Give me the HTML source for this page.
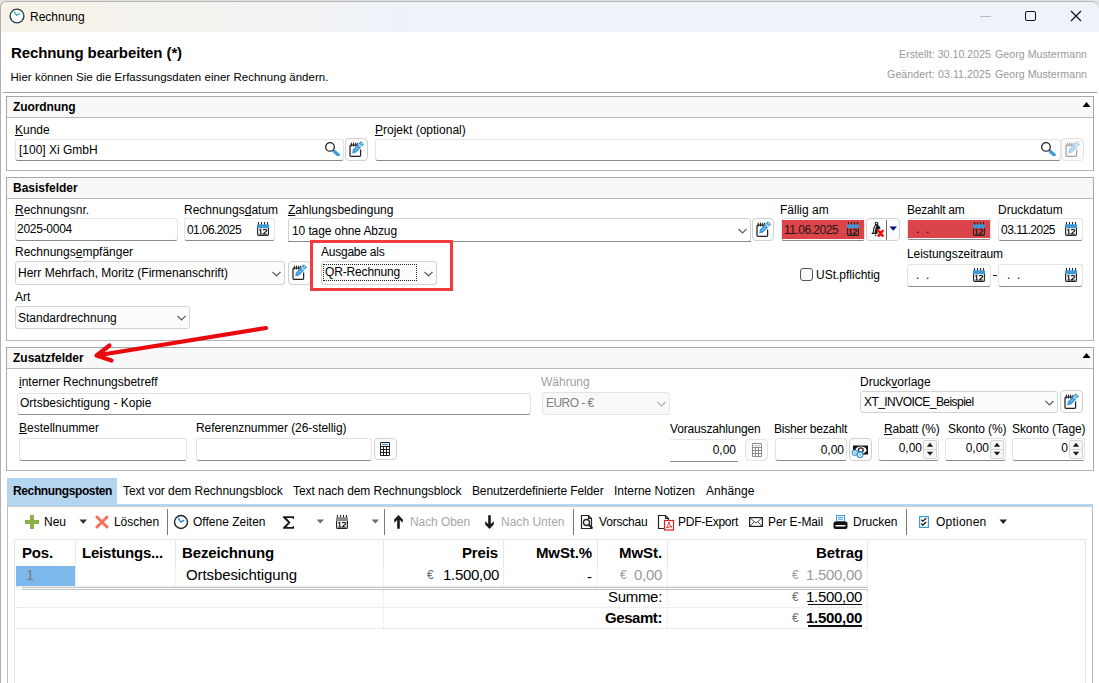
<!DOCTYPE html><html><head><meta charset="utf-8"><style>
html,body{margin:0;padding:0;width:1099px;height:683px;overflow:hidden;background:#fff}
.t,.r{position:absolute}
.t{font-family:"Liberation Sans",sans-serif;white-space:pre}
.t u{text-decoration:underline;text-underline-offset:1px}
</style></head><body>
<div class="r" style="left:0px;top:0px;width:1099px;height:8px;background:#e2e2e2"></div>
<div class="r" style="left:0px;top:1px;width:1099px;height:31px;background:linear-gradient(90deg,#f8f3e8 0px,#f3f2ee 180px,#eef2f9 420px,#eef2f9 100%);border-top:1px solid #b6b6b6;border-left:1px solid #b0b0b0;border-radius:6px 8px 0 0;box-sizing:border-box"></div>
<div class="r" style="left:0px;top:6px;width:1px;height:677px;background:#b0b0b0"></div>
<svg class="r" style="left:9px;top:8px" width="16" height="16" viewBox="0 0 16 16"><circle cx="8" cy="8" r="6.9" fill="#fff" stroke="#243b47" stroke-width="1.4"/><path d="M5.3 4 L7.6 7.3 L10.5 5.6" fill="none" stroke="#3fb3bf" stroke-width="1.4" stroke-linecap="round"/></svg>
<div class="t" style="left:30.00px;top:12px;font-size:12px;line-height:11px;height:15px;font-weight:400;color:#000;letter-spacing:0.000px;">Rechnung</div>
<div class="r" style="left:980px;top:16px;width:11px;height:1px;background:#b8b8b8"></div>
<div class="r" style="left:1025px;top:11px;width:11px;height:10px;border:1.3px solid #111;border-radius:2px;box-sizing:border-box"></div>
<svg class="r" style="left:1070px;top:10px" width="12" height="12" viewBox="0 0 12 12"><path d="M1 1 L11 11 M11 1 L1 11" stroke="#111" stroke-width="1.2"/></svg>
<div class="t" style="left:11.00px;top:46px;font-size:15px;line-height:14px;height:18px;font-weight:700;color:#000;letter-spacing:-0.102px;">Rechnung bearbeiten (*)</div>
<div class="t" style="left:10.50px;top:72px;font-size:11.5px;line-height:10px;height:14px;font-weight:400;color:#000;letter-spacing:0.026px;">Hier können Sie die Erfassungsdaten einer Rechnung ändern.</div>
<div class="t" style="left:487.00px;width:600px;text-align:right;top:49px;font-size:10.6px;line-height:10px;height:14px;font-weight:400;color:#999;letter-spacing:0.043px;">Georg Mustermann</div>
<div class="t" style="left:391.00px;width:600px;text-align:right;top:49px;font-size:10.6px;line-height:10px;height:14px;font-weight:400;color:#999;letter-spacing:0.033px;">Erstellt: 30.10.2025</div>
<div class="t" style="left:487.00px;width:600px;text-align:right;top:69px;font-size:10.6px;line-height:10px;height:14px;font-weight:400;color:#999;letter-spacing:0.043px;">Georg Mustermann</div>
<div class="t" style="left:391.00px;width:600px;text-align:right;top:69px;font-size:10.6px;line-height:10px;height:14px;font-weight:400;color:#999;letter-spacing:0.082px;">Geändert: 03.11.2025</div>
<div class="r" style="left:3px;top:92px;width:1094px;height:1px;background:#a0a0a0"></div>
<div class="r" style="left:6px;top:96px;width:1088px;height:75px;border:1px solid #a9a9a9;border-bottom-color:#b6b6b6;box-sizing:border-box"></div>
<div class="r" style="left:7px;top:97px;width:1086px;height:20px;background:#f8f8f8"></div>
<div class="r" style="left:7px;top:117px;width:1086px;height:1px;background:#b8b8b8"></div>
<div class="t" style="left:13.00px;top:102px;font-size:12px;line-height:11px;height:15px;font-weight:700;color:#000;letter-spacing:-0.090px;">Zuordnung</div>
<svg class="r" style="left:1082px;top:101px" width="9" height="7" viewBox="0 0 9 7"><path d="M0.5 6 L4.5 1 L8.5 6 Z" fill="#000"/></svg>
<div class="t" style="left:15.00px;top:125px;font-size:12px;line-height:11px;height:15px;font-weight:400;color:#000;letter-spacing:0.000px;"><u>K</u>unde</div>
<div class="r" style="left:15px;top:139px;width:329px;height:22px;background:#fff;border:1px solid #e3e3e3;border-bottom:1px solid #8a8a8a;border-radius:3px;box-sizing:border-box"></div>
<div class="t" style="left:19.00px;top:145px;font-size:12px;line-height:11px;height:15px;font-weight:400;color:#000;letter-spacing:0.000px;">[100] Xi GmbH</div>
<svg class="r" style="left:324px;top:141px" width="17" height="15" viewBox="0 0 17 15"><circle cx="6" cy="5.9" r="4.3" fill="none" stroke="#222" stroke-width="1.3"/><path d="M9.2 9.2 L10 10" stroke="#222" stroke-width="2"/><path d="M10.4 10.5 L14.2 14" stroke="#3a9ad9" stroke-width="3.2" stroke-linecap="round"/></svg>
<div class="r" style="left:345px;top:138px;width:23px;height:23px;background:#fdfdfd;border:1px solid #d0d0d0;border-radius:4px;box-sizing:border-box"></div>
<svg class="r" style="left:345px;top:138px" width="23" height="23" viewBox="0 0 23 23">
<path d="M5 8.2 Q5 7.2 6 7.2 H12.5 M5 8.2 V17.3 Q5 18.3 6 18.3 H14.6 Q15.6 18.3 15.6 17.3 V11.5" fill="none" stroke="#222" stroke-width="1.25"/>
<path d="M6.3 5 V8 M8.5 5 V8 M10.7 5 V8 M12.7 5.3 V7.5" stroke="#222" stroke-width="1.1" stroke-linecap="round"/>
<g transform="translate(7.2 15.6) rotate(-47)">
<path d="M0 0 L3.4 -2.2 H10.8 V2.2 H3.4 Z" fill="#3b9ad9"/>
<rect x="11.6" y="-2.2" width="3.4" height="4.4" fill="#3b9ad9"/>
<path d="M4.2 0 H10.5" stroke="#fff" stroke-width="0.8" stroke-dasharray="1.3 0.9"/>
<rect x="12.7" y="-0.6" width="1.3" height="1.2" fill="#fff"/>
</g>
</svg>
<div class="t" style="left:375.00px;top:125px;font-size:12px;line-height:11px;height:15px;font-weight:400;color:#000;letter-spacing:0.000px;"><u>P</u>rojekt (optional)</div>
<div class="r" style="left:375px;top:139px;width:686px;height:22px;background:#fff;border:1px solid #e3e3e3;border-bottom:1px solid #8a8a8a;border-radius:3px;box-sizing:border-box"></div>
<svg class="r" style="left:1040px;top:141px" width="17" height="15" viewBox="0 0 17 15"><circle cx="6" cy="5.9" r="4.3" fill="none" stroke="#222" stroke-width="1.3"/><path d="M9.2 9.2 L10 10" stroke="#222" stroke-width="2"/><path d="M10.4 10.5 L14.2 14" stroke="#3a9ad9" stroke-width="3.2" stroke-linecap="round"/></svg>
<div class="r" style="left:1061px;top:138px;width:23px;height:23px;background:#fbfbfb;border:1px solid #e3e3e3;border-radius:4px;box-sizing:border-box"></div>
<svg class="r" style="left:1061px;top:138px" width="23" height="23" viewBox="0 0 23 23">
<path d="M5 8.2 Q5 7.2 6 7.2 H12.5 M5 8.2 V17.3 Q5 18.3 6 18.3 H14.6 Q15.6 18.3 15.6 17.3 V11.5" fill="none" stroke="#a3a3a3" stroke-width="1.25"/>
<path d="M6.3 5 V8 M8.5 5 V8 M10.7 5 V8 M12.7 5.3 V7.5" stroke="#a3a3a3" stroke-width="1.1" stroke-linecap="round"/>
<g transform="translate(7.2 15.6) rotate(-47)">
<path d="M0 0 L3.4 -2.2 H10.8 V2.2 H3.4 Z" fill="#a9d1ef"/>
<rect x="11.6" y="-2.2" width="3.4" height="4.4" fill="#a9d1ef"/>
<path d="M4.2 0 H10.5" stroke="#fff" stroke-width="0.8" stroke-dasharray="1.3 0.9"/>
<rect x="12.7" y="-0.6" width="1.3" height="1.2" fill="#fff"/>
</g>
</svg>
<div class="r" style="left:6px;top:177px;width:1088px;height:164px;border:1px solid #a9a9a9;border-bottom-color:#b6b6b6;box-sizing:border-box"></div>
<div class="r" style="left:7px;top:178px;width:1086px;height:20px;background:#f8f8f8"></div>
<div class="r" style="left:7px;top:198px;width:1086px;height:1px;background:#b8b8b8"></div>
<div class="t" style="left:13.00px;top:183px;font-size:12px;line-height:11px;height:15px;font-weight:700;color:#000;letter-spacing:0.000px;">Basisfelder</div>
<div class="t" style="left:15.00px;top:205px;font-size:12px;line-height:11px;height:15px;font-weight:400;color:#000;letter-spacing:0.000px;"><u>R</u>echnungsnr.</div>
<div class="r" style="left:15px;top:218px;width:163px;height:23px;background:#fff;border:1px solid #e3e3e3;border-bottom:1px solid #8a8a8a;border-radius:3px;box-sizing:border-box"></div>
<div class="t" style="left:17.00px;top:224px;font-size:12px;line-height:11px;height:15px;font-weight:400;color:#000;letter-spacing:-0.265px;">2025-0004</div>
<div class="t" style="left:184.00px;top:205px;font-size:12px;line-height:11px;height:15px;font-weight:400;color:#000;letter-spacing:0.000px;">Rechnungs<u>d</u>atum</div>
<div class="r" style="left:184px;top:218px;width:91px;height:23px;background:#fff;border:1px solid #e3e3e3;border-bottom:1px solid #8a8a8a;border-radius:3px;box-sizing:border-box"></div>
<svg class="r" style="left:257px;top:222px" width="13" height="14" viewBox="0 0 13 14">
<path d="M1.5 0.3 V3 M4.5 0.3 V3 M7.5 0.3 V3 M10.5 0.3 V3" stroke="#222" stroke-width="1.1" stroke-linecap="round"/>
<rect x="0" y="2.4" width="12" height="3.7" fill="#3a9ad9"/>
<path d="M0.6 6 V12.6 Q0.6 13.4 1.4 13.4 H10.6 Q11.4 13.4 11.4 12.6 V6" fill="none" stroke="#222" stroke-width="1.15"/>
<path d="M2.3 8.2 L3.7 7.4 V12 M2.3 12 H5" fill="none" stroke="#222" stroke-width="1.2"/>
<path d="M6.2 8.1 Q6.6 7.4 8 7.4 Q9.7 7.4 9.7 8.6 Q9.7 9.6 8 10.3 L6.3 12 H9.9" fill="none" stroke="#222" stroke-width="1.2"/>
</svg>
<div class="t" style="left:187.00px;top:225px;font-size:12px;line-height:11px;height:15px;font-weight:400;color:#000;letter-spacing:-0.606px;">01.06.2025</div>
<div class="t" style="left:288.00px;top:205px;font-size:12px;line-height:11px;height:15px;font-weight:400;color:#000;letter-spacing:0.000px;"><u>Z</u>ahlungsbedingung</div>
<div class="r" style="left:288px;top:218px;width:463px;height:24px;background:#fff;border:1px solid #cfcfcf;border-radius:3px;box-sizing:border-box"></div>
<svg class="r" style="left:738px;top:228px" width="9" height="6" viewBox="0 0 9 6"><path d="M0.5 1 L4.5 5 L8.5 1" fill="none" stroke="#5a5a5a" stroke-width="1.1"/></svg>
<div class="r" style="left:288px;top:241px;width:463px;height:1px;background:#8a8a8a"></div>
<div class="t" style="left:292.00px;top:226px;font-size:12px;line-height:11px;height:15px;font-weight:400;color:#000;letter-spacing:-0.098px;">10 tage ohne Abzug</div>
<div class="r" style="left:752px;top:218px;width:22px;height:23px;background:#fdfdfd;border:1px solid #d0d0d0;border-radius:4px;box-sizing:border-box"></div>
<svg class="r" style="left:752px;top:218px" width="23" height="23" viewBox="0 0 23 23">
<path d="M5 8.2 Q5 7.2 6 7.2 H12.5 M5 8.2 V17.3 Q5 18.3 6 18.3 H14.6 Q15.6 18.3 15.6 17.3 V11.5" fill="none" stroke="#222" stroke-width="1.25"/>
<path d="M6.3 5 V8 M8.5 5 V8 M10.7 5 V8 M12.7 5.3 V7.5" stroke="#222" stroke-width="1.1" stroke-linecap="round"/>
<g transform="translate(7.2 15.6) rotate(-47)">
<path d="M0 0 L3.4 -2.2 H10.8 V2.2 H3.4 Z" fill="#3b9ad9"/>
<rect x="11.6" y="-2.2" width="3.4" height="4.4" fill="#3b9ad9"/>
<path d="M4.2 0 H10.5" stroke="#fff" stroke-width="0.8" stroke-dasharray="1.3 0.9"/>
<rect x="12.7" y="-0.6" width="1.3" height="1.2" fill="#fff"/>
</g>
</svg>
<div class="t" style="left:780.00px;top:205px;font-size:12px;line-height:11px;height:15px;font-weight:400;color:#000;letter-spacing:0.000px;">Fällig am</div>
<div class="r" style="left:781px;top:218px;width:84px;height:23px;background:#fff;border:1px solid #e6e6e6;border-bottom:1px solid #8a8a8a;border-radius:3px;box-sizing:border-box"></div>
<div class="r" style="left:782px;top:220px;width:82px;height:19px;background:#db4449"></div>
<svg class="r" style="left:847px;top:222px" width="13" height="14" viewBox="0 0 13 14">
<path d="M1.5 0.3 V3 M4.5 0.3 V3 M7.5 0.3 V3 M10.5 0.3 V3" stroke="#222" stroke-width="1.1" stroke-linecap="round"/>
<rect x="0" y="2.4" width="12" height="3.7" fill="#3a9ad9"/>
<path d="M0.6 6 V12.6 Q0.6 13.4 1.4 13.4 H10.6 Q11.4 13.4 11.4 12.6 V6" fill="none" stroke="#222" stroke-width="1.15"/>
<path d="M2.3 8.2 L3.7 7.4 V12 M2.3 12 H5" fill="none" stroke="#222" stroke-width="1.2"/>
<path d="M6.2 8.1 Q6.6 7.4 8 7.4 Q9.7 7.4 9.7 8.6 Q9.7 9.6 8 10.3 L6.3 12 H9.9" fill="none" stroke="#222" stroke-width="1.2"/>
</svg>
<div class="t" style="left:784.00px;top:225px;font-size:12px;line-height:11px;height:15px;font-weight:400;color:#201818;letter-spacing:-0.517px;">11.06.2025</div>
<div class="r" style="left:866px;top:218px;width:34px;height:23px;background:#fdfdfd;border:1px solid #d0d0d0;border-radius:4px;box-sizing:border-box"></div>
<div class="r" style="left:886px;top:220px;width:1px;height:20px;background:#6a6a6a"></div>
<svg class="r" style="left:869px;top:221px" width="16" height="17" viewBox="0 0 16 17"><circle cx="7.5" cy="2.5" r="1.3" fill="#fff" stroke="#1a1a1a" stroke-width="1.1"/><path d="M7 3.6 C4.8 4.4 4.3 7 4 9.5 C3.8 11.2 3.1 12.2 2.3 12.9 L8.5 12.9 L8.5 8.8 C10 8.4 11.3 8 11.6 7.6 C11.1 5.9 10 4 7 3.6 Z" fill="#1a1a1a"/><path d="M7.1 4.8 C6 6.5 5.6 9 5 12" fill="none" stroke="#f4f4f4" stroke-width="1"/><circle cx="6.5" cy="14.4" r="0.8" fill="#1a1a1a"/><path d="M9.6 10 L13.6 14.6 M13.6 10 L9.6 14.6" stroke="#f00" stroke-width="2.6" stroke-linecap="round"/></svg>
<svg class="r" style="left:889px;top:226px" width="9" height="6" viewBox="0 0 9 6"><path d="M0.5 0.5 H8 L4.25 4.8 Z" fill="#0a0a7a"/></svg>
<div class="t" style="left:907.00px;top:205px;font-size:12px;line-height:11px;height:15px;font-weight:400;color:#000;letter-spacing:-0.253px;">Bezahlt am</div>
<div class="r" style="left:907px;top:218px;width:84px;height:22px;background:#fff;border:1px solid #e6e6e6;border-bottom:1px solid #8a8a8a;border-radius:3px;box-sizing:border-box"></div>
<div class="r" style="left:908px;top:220px;width:82px;height:18px;background:#db4449"></div>
<svg class="r" style="left:973px;top:222px" width="13" height="14" viewBox="0 0 13 14">
<path d="M1.5 0.3 V3 M4.5 0.3 V3 M7.5 0.3 V3 M10.5 0.3 V3" stroke="#222" stroke-width="1.1" stroke-linecap="round"/>
<rect x="0" y="2.4" width="12" height="3.7" fill="#3a9ad9"/>
<path d="M0.6 6 V12.6 Q0.6 13.4 1.4 13.4 H10.6 Q11.4 13.4 11.4 12.6 V6" fill="none" stroke="#222" stroke-width="1.15"/>
<path d="M2.3 8.2 L3.7 7.4 V12 M2.3 12 H5" fill="none" stroke="#222" stroke-width="1.2"/>
<path d="M6.2 8.1 Q6.6 7.4 8 7.4 Q9.7 7.4 9.7 8.6 Q9.7 9.6 8 10.3 L6.3 12 H9.9" fill="none" stroke="#222" stroke-width="1.2"/>
</svg>
<div class="t" style="left:916.00px;top:224px;font-size:12px;line-height:11px;height:15px;font-weight:400;color:#000;letter-spacing:0.000px;">.  .</div>
<div class="t" style="left:998.00px;top:205px;font-size:12px;line-height:11px;height:15px;font-weight:400;color:#000;letter-spacing:0.000px;">Druckdatum</div>
<div class="r" style="left:998px;top:218px;width:85px;height:23px;background:#fff;border:1px solid #e3e3e3;border-bottom:1px solid #8a8a8a;border-radius:3px;box-sizing:border-box"></div>
<svg class="r" style="left:1065px;top:222px" width="13" height="14" viewBox="0 0 13 14">
<path d="M1.5 0.3 V3 M4.5 0.3 V3 M7.5 0.3 V3 M10.5 0.3 V3" stroke="#222" stroke-width="1.1" stroke-linecap="round"/>
<rect x="0" y="2.4" width="12" height="3.7" fill="#3a9ad9"/>
<path d="M0.6 6 V12.6 Q0.6 13.4 1.4 13.4 H10.6 Q11.4 13.4 11.4 12.6 V6" fill="none" stroke="#222" stroke-width="1.15"/>
<path d="M2.3 8.2 L3.7 7.4 V12 M2.3 12 H5" fill="none" stroke="#222" stroke-width="1.2"/>
<path d="M6.2 8.1 Q6.6 7.4 8 7.4 Q9.7 7.4 9.7 8.6 Q9.7 9.6 8 10.3 L6.3 12 H9.9" fill="none" stroke="#222" stroke-width="1.2"/>
</svg>
<div class="t" style="left:1001.00px;top:225px;font-size:12px;line-height:11px;height:15px;font-weight:400;color:#000;letter-spacing:-0.517px;">03.11.2025</div>
<div class="t" style="left:15.00px;top:247px;font-size:12px;line-height:11px;height:15px;font-weight:400;color:#000;letter-spacing:0.000px;">Rechnungs<u>e</u>mpfänger</div>
<div class="r" style="left:15px;top:261px;width:270px;height:24px;background:#fcfcfc;border:1px solid #d2d2d2;border-radius:3px;box-sizing:border-box"></div>
<svg class="r" style="left:272px;top:271px" width="9" height="6" viewBox="0 0 9 6"><path d="M0.5 1 L4.5 5 L8.5 1" fill="none" stroke="#5a5a5a" stroke-width="1.1"/></svg>
<div class="t" style="left:18.00px;top:268px;font-size:12px;line-height:11px;height:15px;font-weight:400;color:#000;letter-spacing:0.000px;">Herr Mehrfach, Moritz (Firmenanschrift)</div>
<div class="r" style="left:288px;top:261px;width:23px;height:24px;background:#fdfdfd;border:1px solid #d0d0d0;border-radius:4px;box-sizing:border-box"></div>
<svg class="r" style="left:288px;top:261px" width="23" height="23" viewBox="0 0 23 23">
<path d="M5 8.2 Q5 7.2 6 7.2 H12.5 M5 8.2 V17.3 Q5 18.3 6 18.3 H14.6 Q15.6 18.3 15.6 17.3 V11.5" fill="none" stroke="#222" stroke-width="1.25"/>
<path d="M6.3 5 V8 M8.5 5 V8 M10.7 5 V8 M12.7 5.3 V7.5" stroke="#222" stroke-width="1.1" stroke-linecap="round"/>
<g transform="translate(7.2 15.6) rotate(-47)">
<path d="M0 0 L3.4 -2.2 H10.8 V2.2 H3.4 Z" fill="#3b9ad9"/>
<rect x="11.6" y="-2.2" width="3.4" height="4.4" fill="#3b9ad9"/>
<path d="M4.2 0 H10.5" stroke="#fff" stroke-width="0.8" stroke-dasharray="1.3 0.9"/>
<rect x="12.7" y="-0.6" width="1.3" height="1.2" fill="#fff"/>
</g>
</svg>
<div class="t" style="left:321.00px;top:247px;font-size:12px;line-height:11px;height:15px;font-weight:400;color:#000;letter-spacing:-0.232px;">Ausgabe als</div>
<div class="r" style="left:321px;top:261px;width:116px;height:24px;background:#fcfcfc;border:1px solid #d2d2d2;border-radius:3px;box-sizing:border-box"></div>
<svg class="r" style="left:424px;top:271px" width="9" height="6" viewBox="0 0 9 6"><path d="M0.5 1 L4.5 5 L8.5 1" fill="none" stroke="#5a5a5a" stroke-width="1.1"/></svg>
<div class="r" style="left:323px;top:264px;width:94px;height:17px;border:1px dotted #222;box-sizing:border-box"></div>
<div class="t" style="left:325.00px;top:267px;font-size:12px;line-height:11px;height:15px;font-weight:400;color:#000;letter-spacing:-0.155px;">QR-Rechnung</div>
<div class="r" style="left:310px;top:240px;width:143px;height:51px;border:3px solid #f23b3e;box-sizing:border-box"></div>
<div class="r" style="left:800px;top:268px;width:13px;height:13px;border:1px solid #555;border-radius:3px;background:#fafafa;box-sizing:border-box"></div>
<div class="t" style="left:816.00px;top:270px;font-size:12px;line-height:11px;height:15px;font-weight:400;color:#000;letter-spacing:0.000px;">USt.pflichtig</div>
<div class="t" style="left:907.00px;top:249px;font-size:12px;line-height:11px;height:15px;font-weight:400;color:#000;letter-spacing:-0.082px;">Leistungszeitraum</div>
<div class="r" style="left:907px;top:264px;width:84px;height:23px;background:#fff;border:1px solid #e3e3e3;border-bottom:1px solid #8a8a8a;border-radius:3px;box-sizing:border-box"></div>
<svg class="r" style="left:973px;top:268px" width="13" height="14" viewBox="0 0 13 14">
<path d="M1.5 0.3 V3 M4.5 0.3 V3 M7.5 0.3 V3 M10.5 0.3 V3" stroke="#222" stroke-width="1.1" stroke-linecap="round"/>
<rect x="0" y="2.4" width="12" height="3.7" fill="#3a9ad9"/>
<path d="M0.6 6 V12.6 Q0.6 13.4 1.4 13.4 H10.6 Q11.4 13.4 11.4 12.6 V6" fill="none" stroke="#222" stroke-width="1.15"/>
<path d="M2.3 8.2 L3.7 7.4 V12 M2.3 12 H5" fill="none" stroke="#222" stroke-width="1.2"/>
<path d="M6.2 8.1 Q6.6 7.4 8 7.4 Q9.7 7.4 9.7 8.6 Q9.7 9.6 8 10.3 L6.3 12 H9.9" fill="none" stroke="#222" stroke-width="1.2"/>
</svg>
<div class="t" style="left:916.00px;top:270px;font-size:12px;line-height:11px;height:15px;font-weight:400;color:#000;letter-spacing:0.000px;">.  .</div>
<div class="r" style="left:993px;top:275px;width:4px;height:1px;background:#222"></div>
<div class="r" style="left:998px;top:264px;width:85px;height:23px;background:#fff;border:1px solid #e3e3e3;border-bottom:1px solid #8a8a8a;border-radius:3px;box-sizing:border-box"></div>
<svg class="r" style="left:1065px;top:268px" width="13" height="14" viewBox="0 0 13 14">
<path d="M1.5 0.3 V3 M4.5 0.3 V3 M7.5 0.3 V3 M10.5 0.3 V3" stroke="#222" stroke-width="1.1" stroke-linecap="round"/>
<rect x="0" y="2.4" width="12" height="3.7" fill="#3a9ad9"/>
<path d="M0.6 6 V12.6 Q0.6 13.4 1.4 13.4 H10.6 Q11.4 13.4 11.4 12.6 V6" fill="none" stroke="#222" stroke-width="1.15"/>
<path d="M2.3 8.2 L3.7 7.4 V12 M2.3 12 H5" fill="none" stroke="#222" stroke-width="1.2"/>
<path d="M6.2 8.1 Q6.6 7.4 8 7.4 Q9.7 7.4 9.7 8.6 Q9.7 9.6 8 10.3 L6.3 12 H9.9" fill="none" stroke="#222" stroke-width="1.2"/>
</svg>
<div class="t" style="left:1007.00px;top:270px;font-size:12px;line-height:11px;height:15px;font-weight:400;color:#000;letter-spacing:0.000px;">.  .</div>
<div class="t" style="left:15.00px;top:292px;font-size:12px;line-height:11px;height:15px;font-weight:400;color:#000;letter-spacing:0.000px;">Art</div>
<div class="r" style="left:15px;top:306px;width:175px;height:23px;background:#fcfcfc;border:1px solid #d2d2d2;border-radius:3px;box-sizing:border-box"></div>
<svg class="r" style="left:177px;top:315px" width="9" height="6" viewBox="0 0 9 6"><path d="M0.5 1 L4.5 5 L8.5 1" fill="none" stroke="#5a5a5a" stroke-width="1.1"/></svg>
<div class="t" style="left:18.00px;top:313px;font-size:12px;line-height:11px;height:15px;font-weight:400;color:#000;letter-spacing:0.000px;">Standardrechnung</div>
<div class="r" style="left:6px;top:347px;width:1088px;height:124px;border:1px solid #a9a9a9;border-bottom-color:#b6b6b6;box-sizing:border-box"></div>
<div class="r" style="left:7px;top:348px;width:1086px;height:20px;background:#f8f8f8"></div>
<div class="r" style="left:7px;top:368px;width:1086px;height:1px;background:#b8b8b8"></div>
<div class="t" style="left:13.00px;top:353px;font-size:12px;line-height:11px;height:15px;font-weight:700;color:#000;letter-spacing:0.000px;">Zusatzfelder</div>
<svg class="r" style="left:1082px;top:352px" width="9" height="7" viewBox="0 0 9 7"><path d="M0.5 6 L4.5 1 L8.5 6 Z" fill="#000"/></svg>
<div class="t" style="left:19.00px;top:377px;font-size:12px;line-height:11px;height:15px;font-weight:400;color:#000;letter-spacing:0.000px;"><u>i</u>nterner Rechnungsbetreff</div>
<div class="r" style="left:17px;top:393px;width:514px;height:22px;background:#fff;border:1px solid #e3e3e3;border-bottom:1px solid #8a8a8a;border-radius:3px;box-sizing:border-box"></div>
<div class="t" style="left:20.00px;top:398px;font-size:12px;line-height:11px;height:15px;font-weight:400;color:#000;letter-spacing:0.000px;">Ortsbesichtigung - Kopie</div>
<div class="t" style="left:541.00px;top:377px;font-size:12px;line-height:11px;height:15px;font-weight:400;color:#a0a0a0;letter-spacing:0.000px;">Währung</div>
<div class="r" style="left:542px;top:392px;width:128px;height:23px;background:#f9f9f9;border:1px solid #e4e4e4;border-radius:3px;box-sizing:border-box"></div>
<svg class="r" style="left:657px;top:401px" width="9" height="6" viewBox="0 0 9 6"><path d="M0.5 1 L4.5 5 L8.5 1" fill="none" stroke="#b0b0b0" stroke-width="1.1"/></svg>
<div class="t" style="left:546.00px;top:398px;font-size:12px;line-height:11px;height:15px;font-weight:400;color:#808080;letter-spacing:-0.564px;">EURO - €</div>
<div class="t" style="left:860.00px;top:377px;font-size:12px;line-height:11px;height:15px;font-weight:400;color:#000;letter-spacing:0.000px;">Druck<u>v</u>orlage</div>
<div class="r" style="left:860px;top:391px;width:198px;height:22px;background:#fcfcfc;border:1px solid #d2d2d2;border-radius:3px;box-sizing:border-box"></div>
<svg class="r" style="left:1045px;top:400px" width="9" height="6" viewBox="0 0 9 6"><path d="M0.5 1 L4.5 5 L8.5 1" fill="none" stroke="#5a5a5a" stroke-width="1.1"/></svg>
<div class="t" style="left:864.00px;top:397px;font-size:12px;line-height:11px;height:15px;font-weight:400;color:#000;letter-spacing:-0.555px;">XT_INVOICE_Beispiel</div>
<div class="r" style="left:1060px;top:390px;width:23px;height:23px;background:#fdfdfd;border:1px solid #d0d0d0;border-radius:4px;box-sizing:border-box"></div>
<svg class="r" style="left:1060px;top:390px" width="23" height="23" viewBox="0 0 23 23">
<path d="M5 8.2 Q5 7.2 6 7.2 H12.5 M5 8.2 V17.3 Q5 18.3 6 18.3 H14.6 Q15.6 18.3 15.6 17.3 V11.5" fill="none" stroke="#222" stroke-width="1.25"/>
<path d="M6.3 5 V8 M8.5 5 V8 M10.7 5 V8 M12.7 5.3 V7.5" stroke="#222" stroke-width="1.1" stroke-linecap="round"/>
<g transform="translate(7.2 15.6) rotate(-47)">
<path d="M0 0 L3.4 -2.2 H10.8 V2.2 H3.4 Z" fill="#3b9ad9"/>
<rect x="11.6" y="-2.2" width="3.4" height="4.4" fill="#3b9ad9"/>
<path d="M4.2 0 H10.5" stroke="#fff" stroke-width="0.8" stroke-dasharray="1.3 0.9"/>
<rect x="12.7" y="-0.6" width="1.3" height="1.2" fill="#fff"/>
</g>
</svg>
<div class="t" style="left:19.00px;top:423px;font-size:12px;line-height:11px;height:15px;font-weight:400;color:#000;letter-spacing:0.000px;"><u>B</u>estellnummer</div>
<div class="r" style="left:19px;top:438px;width:168px;height:23px;background:#fff;border:1px solid #e3e3e3;border-bottom:1px solid #8a8a8a;border-radius:3px;box-sizing:border-box"></div>
<div class="t" style="left:196.00px;top:423px;font-size:12px;line-height:11px;height:15px;font-weight:400;color:#000;letter-spacing:-0.058px;">Referenznummer (26-stellig)</div>
<div class="r" style="left:196px;top:438px;width:176px;height:23px;background:#fff;border:1px solid #e3e3e3;border-bottom:1px solid #8a8a8a;border-radius:3px;box-sizing:border-box"></div>
<div class="r" style="left:374px;top:438px;width:23px;height:22px;background:#fdfdfd;border:1px solid #d0d0d0;border-radius:4px;box-sizing:border-box"></div>
<svg class="r" style="left:380px;top:442px" width="10" height="14" viewBox="0 0 10 14"><rect x="0" y="0" width="10" height="14" rx="1.3" fill="#1e1e1e"/><rect x="1" y="1" width="8" height="3" fill="#fff"/><rect x="2" y="2" width="6" height="1.2" fill="#3a9ad9"/><rect x="1" y="5" width="2" height="2" fill="#fff"/><rect x="4" y="5" width="2" height="2" fill="#fff"/><rect x="7" y="5" width="2" height="2" fill="#fff"/><rect x="1" y="8" width="2" height="2" fill="#fff"/><rect x="4" y="8" width="2" height="2" fill="#fff"/><rect x="7" y="8" width="2" height="2" fill="#fff"/><rect x="1" y="11" width="2" height="2" fill="#fff"/><rect x="4" y="11" width="2" height="2" fill="#fff"/><rect x="7" y="11" width="2" height="2" fill="#fff"/></svg>
<div class="t" style="left:670.00px;top:424px;font-size:12px;line-height:11px;height:15px;font-weight:400;color:#000;letter-spacing:-0.150px;">Vorauszahlungen</div>
<div class="r" style="left:670px;top:439px;width:68px;height:1px;background:#e6e6e6"></div>
<div class="r" style="left:670px;top:461px;width:68px;height:1px;background:#8a8a8a"></div>
<div class="t" style="left:136.00px;width:600px;text-align:right;top:445px;font-size:12px;line-height:11px;height:15px;font-weight:400;color:#000;letter-spacing:0.000px;">0,00</div>
<div class="r" style="left:745px;top:439px;width:23px;height:22px;background:#fafafa;border:1px solid #e3e3e3;border-radius:4px;box-sizing:border-box"></div>
<svg class="r" style="left:752px;top:443px" width="10" height="14" viewBox="0 0 10 14"><rect x="0" y="0" width="10" height="14" rx="1.3" fill="#8a8a8a"/><rect x="1" y="1" width="8" height="3" fill="#fff"/><rect x="2" y="2" width="6" height="1.2" fill="#c8c8c8"/><rect x="1" y="5" width="2" height="2" fill="#fff"/><rect x="4" y="5" width="2" height="2" fill="#fff"/><rect x="7" y="5" width="2" height="2" fill="#fff"/><rect x="1" y="8" width="2" height="2" fill="#fff"/><rect x="4" y="8" width="2" height="2" fill="#fff"/><rect x="7" y="8" width="2" height="2" fill="#fff"/><rect x="1" y="11" width="2" height="2" fill="#fff"/><rect x="4" y="11" width="2" height="2" fill="#fff"/><rect x="7" y="11" width="2" height="2" fill="#fff"/></svg>
<div class="t" style="left:774.00px;top:424px;font-size:12px;line-height:11px;height:15px;font-weight:400;color:#000;letter-spacing:-0.218px;">Bisher bezahlt</div>
<div class="r" style="left:775px;top:438px;width:72px;height:23px;background:#fff;border:1px solid #e3e3e3;border-bottom:1px solid #8a8a8a;border-radius:3px;box-sizing:border-box"></div>
<div class="t" style="left:244.00px;width:600px;text-align:right;top:445px;font-size:12px;line-height:11px;height:15px;font-weight:400;color:#000;letter-spacing:0.000px;">0,00</div>
<div class="r" style="left:849px;top:438px;width:23px;height:23px;background:#fdfdfd;border:1px solid #d0d0d0;border-radius:4px;box-sizing:border-box"></div>
<svg class="r" style="left:851px;top:444px" width="19" height="15" viewBox="0 0 19 15"><rect x="2" y="1.5" width="15" height="9" fill="#111"/><ellipse cx="10" cy="6" rx="5.6" ry="3.6" fill="#fff"/><ellipse cx="9.8" cy="6" rx="2.4" ry="2.2" fill="#fff" stroke="#222" stroke-width="1.3"/><circle cx="3.8" cy="8.8" r="2.6" fill="#fff" stroke="#3a9ad9" stroke-width="1.3"/><rect x="3.1" y="8.1" width="1.5" height="1.5" fill="#3a9ad9"/><circle cx="9.1" cy="10.8" r="2.8" fill="#fff" stroke="#3a9ad9" stroke-width="1.3"/><rect x="8.3" y="10" width="1.6" height="1.6" fill="#3a9ad9"/></svg>
<div class="t" style="left:884.00px;top:424px;font-size:12px;line-height:11px;height:15px;font-weight:400;color:#000;letter-spacing:-0.185px;"><u>R</u>abatt (%)</div>
<div class="r" style="left:878px;top:438px;width:61px;height:23px;background:#fff;border:1px solid #e3e3e3;border-bottom:1px solid #8a8a8a;border-radius:3px;box-sizing:border-box"></div>
<div class="t" style="left:322.00px;width:600px;text-align:right;top:443px;font-size:12px;line-height:11px;height:15px;font-weight:400;color:#000;letter-spacing:0.000px;">0,00</div>
<div class="r" style="left:923px;top:440px;width:14px;height:19px;background:#f7f7f7;border:1px solid #d4d4d4;border-radius:2px;box-sizing:border-box"></div>
<div class="r" style="left:923px;top:449px;width:14px;height:1px;background:#d4d4d4"></div>
<svg class="r" style="left:923px;top:440px" width="14" height="19" viewBox="0 0 14 19"><path d="M3.8 6.8 L7.0 2.8 L10.2 6.8 Z M3.8 11.8 L7.0 15.6 L10.2 11.8 Z" fill="#1a1a1a"/></svg>
<div class="t" style="left:948.00px;top:424px;font-size:12px;line-height:11px;height:15px;font-weight:400;color:#000;letter-spacing:-0.086px;">Skonto (%)</div>
<div class="r" style="left:945px;top:438px;width:61px;height:23px;background:#fff;border:1px solid #e3e3e3;border-bottom:1px solid #8a8a8a;border-radius:3px;box-sizing:border-box"></div>
<div class="t" style="left:389.00px;width:600px;text-align:right;top:443px;font-size:12px;line-height:11px;height:15px;font-weight:400;color:#000;letter-spacing:0.000px;">0,00</div>
<div class="r" style="left:990px;top:440px;width:14px;height:19px;background:#f7f7f7;border:1px solid #d4d4d4;border-radius:2px;box-sizing:border-box"></div>
<div class="r" style="left:990px;top:449px;width:14px;height:1px;background:#d4d4d4"></div>
<svg class="r" style="left:990px;top:440px" width="14" height="19" viewBox="0 0 14 19"><path d="M3.8 6.8 L7.0 2.8 L10.2 6.8 Z M3.8 11.8 L7.0 15.6 L10.2 11.8 Z" fill="#1a1a1a"/></svg>
<div class="t" style="left:1012.00px;top:424px;font-size:12px;line-height:11px;height:15px;font-weight:400;color:#000;letter-spacing:-0.093px;">Skonto (Tage)</div>
<div class="r" style="left:1012px;top:438px;width:73px;height:23px;background:#fff;border:1px solid #e3e3e3;border-bottom:1px solid #8a8a8a;border-radius:3px;box-sizing:border-box"></div>
<div class="t" style="left:468.00px;width:600px;text-align:right;top:443px;font-size:12px;line-height:11px;height:15px;font-weight:400;color:#000;letter-spacing:0.000px;">0</div>
<div class="r" style="left:1069px;top:440px;width:14px;height:19px;background:#f7f7f7;border:1px solid #d4d4d4;border-radius:2px;box-sizing:border-box"></div>
<div class="r" style="left:1069px;top:449px;width:14px;height:1px;background:#d4d4d4"></div>
<svg class="r" style="left:1069px;top:440px" width="14" height="19" viewBox="0 0 14 19"><path d="M3.8 6.8 L7.0 2.8 L10.2 6.8 Z M3.8 11.8 L7.0 15.6 L10.2 11.8 Z" fill="#1a1a1a"/></svg>
<div class="r" style="left:7px;top:478px;width:110px;height:27px;background:#b4d5f0"></div>
<div class="r" style="left:7px;top:504px;width:1086px;height:2px;background:#b4d5f0"></div>
<div class="r" style="left:7px;top:506px;width:1086px;height:1px;background:#cfcfcf"></div>
<div class="r" style="left:7px;top:506px;width:1px;height:177px;background:#bdbdbd"></div>
<div class="r" style="left:1092px;top:506px;width:1px;height:177px;background:#bdbdbd"></div>
<div class="t" style="left:13.00px;top:486px;font-size:12px;line-height:11px;height:15px;font-weight:700;color:#000;letter-spacing:-0.378px;">Rechnungsposten</div>
<div class="t" style="left:123.00px;top:486px;font-size:12px;line-height:11px;height:15px;font-weight:400;color:#000;letter-spacing:-0.035px;">Text vor dem Rechnungsblock</div>
<div class="t" style="left:293.00px;top:486px;font-size:12px;line-height:11px;height:15px;font-weight:400;color:#000;letter-spacing:-0.057px;">Text nach dem Rechnungsblock</div>
<div class="t" style="left:472.00px;top:486px;font-size:12px;line-height:11px;height:15px;font-weight:400;color:#000;letter-spacing:-0.130px;">Benutzerdefinierte Felder</div>
<div class="t" style="left:614.00px;top:486px;font-size:12px;line-height:11px;height:15px;font-weight:400;color:#000;letter-spacing:-0.025px;">Interne Notizen</div>
<div class="t" style="left:706.00px;top:486px;font-size:12px;line-height:11px;height:15px;font-weight:400;color:#000;letter-spacing:0.064px;">Anhänge</div>
<svg class="r" style="left:25px;top:515px" width="14" height="14" viewBox="0 0 14 14"><path d="M5 0 H9 V5 H14 V9 H9 V14 H5 V9 H0 V5 H5 Z" fill="#8db24a"/></svg>
<div class="t" style="left:44.00px;top:517px;font-size:12px;line-height:11px;height:15px;font-weight:400;color:#000;letter-spacing:0.000px;">Neu</div>
<svg class="r" style="left:79px;top:519px" width="9" height="6" viewBox="0 0 9 6"><path d="M0.5 0.5 H8 L4.25 5 Z" fill="#333"/></svg>
<svg class="r" style="left:95px;top:515px" width="14" height="14" viewBox="0 0 14 14"><path d="M2 2 L12 12 M12 2 L2 12" stroke="#f7705e" stroke-width="3" stroke-linecap="round"/></svg>
<div class="t" style="left:114.00px;top:517px;font-size:12px;line-height:11px;height:15px;font-weight:400;color:#000;letter-spacing:-0.053px;">Löschen</div>
<div class="r" style="left:167px;top:509px;width:1px;height:26px;background:#7a7a7a"></div>
<svg class="r" style="left:173px;top:514px" width="16" height="16" viewBox="0 0 16 16"><circle cx="8" cy="8" r="6.5" fill="none" stroke="#222" stroke-width="1.4"/><path d="M5.5 4.5 L7.8 8 L10.8 6.5" fill="none" stroke="#3a8fd8" stroke-width="1.4" stroke-linecap="round"/></svg>
<div class="t" style="left:193.00px;top:517px;font-size:12px;line-height:11px;height:15px;font-weight:400;color:#000;letter-spacing:0.000px;">Offene Zeiten</div>
<svg class="r" style="left:282px;top:515px" width="13" height="15" viewBox="0 0 13 15"><path d="M1 1.2 H12 V4 H11 L10.5 3 H4.5 L8.5 7.5 L4.5 12 H10.5 L11 11 H12 V13.8 H1 V12.5 L6 7.5 L1 2.5 Z" fill="#1a1a1a"/></svg>
<svg class="r" style="left:316px;top:519px" width="9" height="6" viewBox="0 0 9 6"><path d="M0.5 0.5 H8 L4.25 4.5 Z" fill="#6e6e6e"/></svg>
<svg class="r" style="left:336px;top:515px" width="13" height="14" viewBox="0 0 13 14">
<path d="M1.5 0.3 V3 M4.5 0.3 V3 M7.5 0.3 V3 M10.5 0.3 V3" stroke="#222" stroke-width="1.1" stroke-linecap="round"/>
<rect x="0" y="2.4" width="12" height="3.7" fill="#8a8a8a"/>
<path d="M0.6 6 V12.6 Q0.6 13.4 1.4 13.4 H10.6 Q11.4 13.4 11.4 12.6 V6" fill="none" stroke="#222" stroke-width="1.15"/>
<path d="M2.3 8.2 L3.7 7.4 V12 M2.3 12 H5" fill="none" stroke="#222" stroke-width="1.2"/>
<path d="M6.2 8.1 Q6.6 7.4 8 7.4 Q9.7 7.4 9.7 8.6 Q9.7 9.6 8 10.3 L6.3 12 H9.9" fill="none" stroke="#222" stroke-width="1.2"/>
</svg>
<svg class="r" style="left:371px;top:519px" width="9" height="6" viewBox="0 0 9 6"><path d="M0.5 0.5 H8 L4.25 4.5 Z" fill="#6e6e6e"/></svg>
<div class="r" style="left:384px;top:509px;width:1px;height:26px;background:#7a7a7a"></div>
<svg class="r" style="left:393px;top:515px" width="11" height="15" viewBox="0 0 11 15"><path d="M5.5 0 L9.8 4.4 V7.8 L6.8 4.9 V13.8 H4.2 V4.9 L1.2 7.8 V4.4 Z" fill="#1a1a1a"/></svg>
<div class="t" style="left:410.00px;top:517px;font-size:12px;line-height:11px;height:15px;font-weight:400;color:#a8a8a8;letter-spacing:-0.078px;">Nach Oben</div>
<svg class="r" style="left:484px;top:515px" width="11" height="15" viewBox="0 0 11 15"><path d="M5.5 14 L9.8 9.6 V6.2 L6.8 9.1 V0.2 H4.2 V9.1 L1.2 6.2 V9.6 Z" fill="#1a1a1a"/></svg>
<div class="t" style="left:501.00px;top:517px;font-size:12px;line-height:11px;height:15px;font-weight:400;color:#a8a8a8;letter-spacing:0.013px;">Nach Unten</div>
<div class="r" style="left:573px;top:509px;width:1px;height:26px;background:#7a7a7a"></div>
<svg class="r" style="left:580px;top:514px" width="14" height="16" viewBox="0 0 14 16"><path d="M1.5 1.5 H8.5 L11.5 4.5 V14.5 H1.5 Z M8.5 1.5 V4.5 H11.5" fill="none" stroke="#222" stroke-width="1.2"/><circle cx="6.5" cy="8.5" r="3" fill="#fff" stroke="#222" stroke-width="1.3"/><path d="M8.5 10.5 L12.5 14.5" stroke="#222" stroke-width="1.8"/></svg>
<div class="t" style="left:599.00px;top:517px;font-size:12px;line-height:11px;height:15px;font-weight:400;color:#000;letter-spacing:-0.192px;">Vorschau</div>
<svg class="r" style="left:657px;top:514px" width="18" height="17" viewBox="0 0 18 17"><path d="M1.5 1.5 H8.5 L11.5 4.5 V14.5 H1.5 Z M8.5 1.5 V4.5 H11.5" fill="#fff" stroke="#222" stroke-width="1.2"/><rect x="7.5" y="6.5" width="9" height="9.5" fill="#fff" stroke="#e02020" stroke-width="1.2"/><path d="M9.5 14 C11 11 12 9 12 8 C12 10 13 12 15 13 C13 12.5 11 13 9.5 14 Z" fill="none" stroke="#e02020" stroke-width="0.9"/></svg>
<div class="t" style="left:678.00px;top:517px;font-size:12px;line-height:11px;height:15px;font-weight:400;color:#000;letter-spacing:-0.268px;">PDF-Export</div>
<svg class="r" style="left:749px;top:517px" width="14" height="10" viewBox="0 0 14 10"><rect x="0.6" y="0.6" width="12.8" height="8.8" fill="#fff" stroke="#222" stroke-width="1.2"/><path d="M1 1 L7 6 L13 1 M1 9.2 L5 5 M13 9.2 L9 5" fill="none" stroke="#333" stroke-width="0.9"/></svg>
<div class="t" style="left:768.00px;top:517px;font-size:12px;line-height:11px;height:15px;font-weight:400;color:#000;letter-spacing:-0.101px;">Per E-Mail</div>
<svg class="r" style="left:833px;top:515px" width="15" height="15" viewBox="0 0 15 15"><rect x="3.5" y="0.5" width="8" height="6" fill="#fff" stroke="#3a9ad9" stroke-width="1"/><path d="M5 2.5 H10 M5 4.3 H10" stroke="#3a9ad9" stroke-width="0.9"/><rect x="0.5" y="6.5" width="14" height="7.5" rx="2" fill="#111"/><rect x="2.5" y="10" width="10" height="1.5" fill="#fff"/></svg>
<div class="t" style="left:853.00px;top:517px;font-size:12px;line-height:11px;height:15px;font-weight:400;color:#000;letter-spacing:-0.026px;">Drucken</div>
<div class="r" style="left:906px;top:509px;width:1px;height:26px;background:#7a7a7a"></div>
<svg class="r" style="left:919px;top:516px" width="10" height="12" viewBox="0 0 10 12"><rect x="0.6" y="0.6" width="8.8" height="10.8" fill="#fff" stroke="#3a9ad9" stroke-width="1.2"/><path d="M2.3 3.8 L3.8 5.2 L7.2 2.2 M2.3 7.6 L3.8 9 L7.2 6" fill="none" stroke="#1a1a1a" stroke-width="1.3"/></svg>
<div class="t" style="left:936.00px;top:517px;font-size:12px;line-height:11px;height:15px;font-weight:400;color:#000;letter-spacing:0.224px;">Optionen</div>
<svg class="r" style="left:999px;top:519px" width="9" height="6" viewBox="0 0 9 6"><path d="M0.5 0.5 H8 L4.25 5 Z" fill="#222"/></svg>
<div class="r" style="left:14px;top:539px;width:1072px;height:144px;border:1px solid #e3e3e3;border-bottom:none;box-sizing:border-box"></div>
<div class="r" style="left:75px;top:541px;width:1px;height:24px;background:#e6e6e6"></div>
<div class="r" style="left:175px;top:541px;width:1px;height:24px;background:#e6e6e6"></div>
<div class="r" style="left:383px;top:541px;width:1px;height:24px;background:#e6e6e6"></div>
<div class="r" style="left:503px;top:541px;width:1px;height:24px;background:#e6e6e6"></div>
<div class="r" style="left:597px;top:541px;width:1px;height:24px;background:#e6e6e6"></div>
<div class="r" style="left:667px;top:541px;width:1px;height:24px;background:#e6e6e6"></div>
<div class="r" style="left:867px;top:541px;width:1px;height:24px;background:#e6e6e6"></div>
<div class="t" style="left:22.00px;top:546px;font-size:15px;line-height:14px;height:18px;font-weight:700;color:#000;letter-spacing:-0.170px;">Pos.</div>
<div class="t" style="left:82.00px;top:546px;font-size:15px;line-height:14px;height:18px;font-weight:700;color:#000;letter-spacing:-0.195px;">Leistungs...</div>
<div class="t" style="left:182.00px;top:546px;font-size:15px;line-height:14px;height:18px;font-weight:700;color:#000;letter-spacing:-0.122px;">Bezeichnung</div>
<div class="t" style="left:-102.00px;width:600px;text-align:right;top:546px;font-size:15px;line-height:14px;height:18px;font-weight:700;color:#000;letter-spacing:-0.139px;">Preis</div>
<div class="t" style="left:-8.00px;width:600px;text-align:right;top:546px;font-size:15px;line-height:14px;height:18px;font-weight:700;color:#000;letter-spacing:-0.111px;">MwSt.%</div>
<div class="t" style="left:62.00px;width:600px;text-align:right;top:546px;font-size:15px;line-height:14px;height:18px;font-weight:700;color:#000;letter-spacing:-0.066px;">MwSt.</div>
<div class="t" style="left:263.00px;width:600px;text-align:right;top:546px;font-size:15px;line-height:14px;height:18px;font-weight:700;color:#000;letter-spacing:-0.086px;">Betrag</div>
<div class="r" style="left:16px;top:566px;width:59px;height:20px;background:#7cb8eb"></div>
<div class="t" style="left:26.00px;top:568px;font-size:15px;line-height:14px;height:18px;font-weight:400;color:#7a7a7a;letter-spacing:0.000px;">1</div>
<div class="t" style="left:186.00px;top:568px;font-size:15px;line-height:14px;height:18px;font-weight:400;color:#000;letter-spacing:-0.098px;">Ortsbesichtigung</div>
<div class="t" style="left:427.00px;top:570px;font-size:12px;line-height:11px;height:15px;font-weight:400;color:#6a6a6a;letter-spacing:0.000px;">€</div>
<div class="t" style="left:-101.00px;width:600px;text-align:right;top:568px;font-size:15px;line-height:14px;height:18px;font-weight:400;color:#000;letter-spacing:-0.299px;">1.500,00</div>
<div class="t" style="left:-8.00px;width:600px;text-align:right;top:570px;font-size:15px;line-height:14px;height:18px;font-weight:400;color:#000;letter-spacing:0.000px;">-</div>
<div class="t" style="left:620.00px;top:570px;font-size:12px;line-height:11px;height:15px;font-weight:400;color:#9a9a9a;letter-spacing:0.000px;">€</div>
<div class="t" style="left:62.00px;width:600px;text-align:right;top:568px;font-size:15px;line-height:14px;height:18px;font-weight:400;color:#9a9a9a;letter-spacing:-0.299px;">0,00</div>
<div class="t" style="left:792.00px;top:570px;font-size:12px;line-height:11px;height:15px;font-weight:400;color:#9a9a9a;letter-spacing:0.000px;">€</div>
<div class="t" style="left:262.00px;width:600px;text-align:right;top:568px;font-size:15px;line-height:14px;height:18px;font-weight:400;color:#9a9a9a;letter-spacing:-0.299px;">1.500,00</div>
<div class="r" style="left:75px;top:566px;width:1px;height:20px;border-left:1px dotted #e2e2e2"></div>
<div class="r" style="left:175px;top:566px;width:1px;height:20px;border-left:1px dotted #e2e2e2"></div>
<div class="r" style="left:383px;top:566px;width:1px;height:20px;border-left:1px dotted #e2e2e2"></div>
<div class="r" style="left:503px;top:566px;width:1px;height:20px;border-left:1px dotted #e2e2e2"></div>
<div class="r" style="left:597px;top:566px;width:1px;height:20px;border-left:1px dotted #e2e2e2"></div>
<div class="r" style="left:667px;top:566px;width:1px;height:20px;border-left:1px dotted #e2e2e2"></div>
<div class="r" style="left:867px;top:566px;width:1px;height:20px;border-left:1px dotted #e2e2e2"></div>
<div class="r" style="left:16px;top:586px;width:852px;height:1px;border-top:1px dotted #e0e0e0"></div>
<div class="r" style="left:22px;top:587px;width:846px;height:1px;background:#c2c2c2"></div>
<div class="r" style="left:22px;top:589px;width:846px;height:1px;background:#c2c2c2"></div>
<div class="r" style="left:383px;top:590px;width:1px;height:38px;border-left:1px dotted #e2e2e2"></div>
<div class="r" style="left:667px;top:590px;width:1px;height:38px;border-left:1px dotted #e2e2e2"></div>
<div class="r" style="left:867px;top:590px;width:1px;height:38px;border-left:1px dotted #e2e2e2"></div>
<div class="t" style="left:62.00px;width:600px;text-align:right;top:590px;font-size:15px;line-height:14px;height:18px;font-weight:400;color:#000;letter-spacing:-0.308px;">Summe:</div>
<div class="t" style="left:792.00px;top:592px;font-size:12px;line-height:11px;height:15px;font-weight:400;color:#707070;letter-spacing:0.000px;">€</div>
<div class="t" style="left:262.00px;width:600px;text-align:right;top:590px;font-size:15px;line-height:14px;height:18px;font-weight:400;color:#000;letter-spacing:-0.299px;">1.500,00</div>
<div class="r" style="left:808px;top:604px;width:54px;height:1px;background:#111"></div>
<div class="r" style="left:16px;top:607px;width:852px;height:1px;border-top:1px dotted #e0e0e0"></div>
<div class="t" style="left:62.00px;width:600px;text-align:right;top:611px;font-size:15px;line-height:14px;height:18px;font-weight:700;color:#000;letter-spacing:-0.432px;">Gesamt:</div>
<div class="t" style="left:792.00px;top:613px;font-size:12px;line-height:11px;height:15px;font-weight:400;color:#707070;letter-spacing:0.000px;">€</div>
<div class="t" style="left:262.00px;width:600px;text-align:right;top:611px;font-size:15px;line-height:14px;height:18px;font-weight:700;color:#000;letter-spacing:-0.299px;">1.500,00</div>
<div class="r" style="left:808px;top:625px;width:54px;height:2px;background:#111"></div>
<div class="r" style="left:16px;top:628px;width:852px;height:1px;border-top:1px dotted #e0e0e0"></div>
<div class="r" style="left:1092px;top:506px;width:1px;height:177px;background:#bdbdbd"></div>
<svg class="r" style="left:0;top:0" width="1099" height="683"><g stroke="#e8080e" stroke-width="4.2" stroke-linecap="round" stroke-linejoin="round" fill="none"><path d="M266 328 L98 355.3"/><path d="M109.5 345.5 L96.5 355.5 L111.5 360.5"/></g></svg>
</body></html>
